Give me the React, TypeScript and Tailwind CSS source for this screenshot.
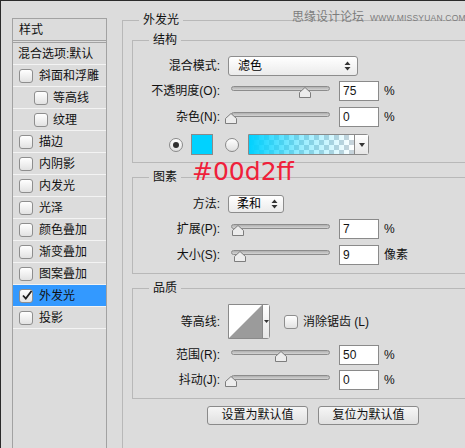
import clsx from 'clsx'
import type { ReactNode } from 'react'

const FONT = "font-['Liberation_Sans','Noto_Sans_CJK_SC',sans-serif]"

type StyleItem = { label: string; checked?: boolean; indent?: boolean; active?: boolean }

const STYLE_ITEMS: StyleItem[] = [
  { label: '斜面和浮雕' },
  { label: '等高线', indent: true },
  { label: '纹理', indent: true },
  { label: '描边' },
  { label: '内阴影' },
  { label: '内发光' },
  { label: '光泽' },
  { label: '颜色叠加' },
  { label: '渐变叠加' },
  { label: '图案叠加' },
  { label: '外发光', checked: true, active: true },
  { label: '投影' },
]

function Checkbox({ checked }: { checked?: boolean }) {
  return (
    <span className="relative flex h-[14px] w-[14px] shrink-0 items-center justify-center rounded-[3px] border border-[#8e8e8e] bg-linear-to-b from-white to-[#e2e2e2]">
      {checked && (
        <svg width="12" height="12" viewBox="0 0 12 12" className="absolute -top-[1px] left-[1px]">
          <path d="M2 6.5 L4.8 9.5 L10.5 2" fill="none" stroke="#1e1e1e" strokeWidth="1.8" />
        </svg>
      )}
    </span>
  )
}

function Radio({ selected }: { selected?: boolean }) {
  return (
    <span className="flex h-[14px] w-[14px] shrink-0 items-center justify-center rounded-full border border-[#8a8a8a] bg-linear-to-b from-white to-[#e0e0e0]">
      {selected && <span className="h-[6px] w-[6px] rounded-full bg-[#2f2f2f]" />}
    </span>
  )
}

function Slider({ pct }: { pct: number }) {
  return (
    <div className="relative ml-[5px] h-[20px] w-[111px]">
      <div className="absolute left-[6px] right-[6px] top-[5px] h-[5px] rounded-full border border-[#8c8c8c] bg-linear-to-b from-[#b0b0b0] to-[#d4d4d4]" />
      <svg
        className="absolute top-[6px]"
        style={{ left: Math.round(pct * 99) }}
        width="12"
        height="11"
        viewBox="0 0 12 11"
      >
        <path d="M0.5 10.5 V5.5 L6 0.5 L11.5 5.5 V10.5 Z" fill="#ececec" stroke="#7d7d7d" />
      </svg>
    </div>
  )
}

function NumberField({ value }: { value: string }) {
  return (
    <div className="ml-[3px] h-[20px] w-[40px] border border-[#8a8a8a] bg-white pl-[3px] text-[12px] leading-[18px] text-[#141414]">
      {value}
    </div>
  )
}

function UpDown() {
  return (
    <svg width="7" height="10" viewBox="0 0 7 10">
      <path d="M3.5 0.5 L6.5 4 H0.5 Z M0.5 6 H6.5 L3.5 9.5 Z" fill="#333" />
    </svg>
  )
}

function Row({ label, className, children }: { label: string; className?: string; children: ReactNode }) {
  return (
    <div className={clsx('flex items-center', className)}>
      <span className="w-[87px] whitespace-nowrap text-right text-[12px] text-[#111]">{label}</span>
      {children}
    </div>
  )
}

function GroupBox({ title, className, children }: { title: string; className?: string; children: ReactNode }) {
  return (
    <div className={clsx('relative border border-[#b8b8b8]', className)}>
      <span className="absolute -top-[9px] left-[16px] bg-[#dcdcdc] px-[4px] text-[12px] leading-[16px] text-[#111]">
        {title}
      </span>
      {children}
    </div>
  )
}

function SliderRow({ label, pct, value, unit, className }: { label: string; pct: number; value: string; unit: string; className?: string }) {
  return (
    <Row label={label} className={clsx('h-[20px]', className)}>
      <Slider pct={pct} />
      <NumberField value={value} />
      <span className="ml-[5px] text-[12px] text-[#111]">{unit}</span>
    </Row>
  )
}

function StyleList() {
  return (
    <div className="h-[450px] w-[95px] border border-[#a2a2a2] text-[12px] text-[#111]">
      <div className="flex h-[22px] items-center border-b border-[#a2a2a2] pl-[6px]">样式</div>
      <div className="mt-[1px] flex h-[23px] items-center border-y border-t-[#a2a2a2] border-b-[#f3f3f3] pl-[5px] whitespace-nowrap">
        混合选项:默认
      </div>
      {STYLE_ITEMS.map((item) => (
        <div
          key={item.label}
          className={clsx(
            'flex h-[22px] items-center border-b border-[#f3f3f3] whitespace-nowrap',
            item.indent ? 'pl-[21px]' : 'pl-[6px]',
            item.active && 'bg-[#3399ff]',
          )}
        >
          <Checkbox checked={item.checked} />
          <span className={item.indent ? 'ml-[5px]' : 'ml-[6px]'}>{item.label}</span>
        </div>
      ))}
    </div>
  )
}

export default function App() {
  return (
    <div className={clsx('relative flex h-[448px] w-[465px] overflow-hidden border-l border-t border-[#2b2b2b] bg-[#dcdcdc]', FONT)}>
      {/* left: style list */}
      <div className="w-[121px] shrink-0 pl-[11px] pt-[17px]">
        <StyleList />
      </div>

      {/* right: outer glow options */}
      <div className="shrink-0 pt-[19px]">
        <GroupBox title="外发光" className="h-[460px] w-[360px] pl-[9px] pt-[19px]">
          <GroupBox title="结构" className="pb-[7px] pt-[15px]">
            <Row label="混合模式:" className="h-[20px]">
              <div className="ml-[8px] flex h-[20px] w-[130px] items-center justify-between rounded-[3px] border border-[#8d8d8d] bg-linear-to-b from-white to-[#ebebeb] pl-[9px] pr-[6px] text-[12px]">
                <span>滤色</span>
                <UpDown />
              </div>
            </Row>
            <SliderRow label="不透明度(O):" pct={0.75} value="75" unit="%" className="mt-[5px]" />
            <SliderRow label="杂色(N):" pct={0} value="0" unit="%" className="mt-[6px]" />
            <div className="mt-[7px] flex h-[21px] items-center pl-[36px]">
              <Radio selected />
              <span className="ml-[8px] h-[21px] w-[22px] border border-[#8a8a8a] bg-[#00d2ff]" />
              <span className="ml-[12px]">
                <Radio />
              </span>
              <div className="ml-[9px] flex h-[21px] rounded-r-[3px] border border-[#8a8a8a]">
                <div className="h-full w-[105px] bg-[repeating-conic-gradient(#c9d3da_0%_25%,#ffffff_0%_50%)] bg-[length:10px_10px]">
                  <div className="h-full w-full bg-linear-to-r from-[#00d2ff] via-[#00d2ff]/40 to-transparent" />
                </div>
                <div className="flex w-[14px] items-center justify-center border-l border-[#8a8a8a] bg-linear-to-b from-white to-[#e6e6e6]">
                  <svg width="6" height="4" viewBox="0 0 6 4">
                    <path d="M0 0 H6 L3 4 Z" fill="#333" />
                  </svg>
                </div>
              </div>
            </div>
          </GroupBox>

          <GroupBox title="图素" className="mt-[14px] pb-[8px] pt-[17px]">
            <Row label="方法:" className="h-[18px]">
              <div className="ml-[8px] flex h-[18px] w-[56px] items-center justify-between rounded-[3px] border border-[#8d8d8d] bg-linear-to-b from-white to-[#ebebeb] pl-[8px] pr-[5px] text-[12px]">
                <span>柔和</span>
                <UpDown />
              </div>
            </Row>
            <SliderRow label="扩展(P):" pct={0.07} value="7" unit="%" className="mt-[6px]" />
            <SliderRow label="大小(S):" pct={0.09} value="9" unit="像素" className="mt-[6px]" />
          </GroupBox>

          <GroupBox title="品质" className="mt-[14px] pb-[8px] pt-[15px]">
            <Row label="等高线:" className="h-[35px]">
              <div className="ml-[8px] flex h-[35px] w-[42px] rounded-r-[3px] border border-[#8a8a8a] bg-white">
                <svg width="33" height="33" viewBox="0 0 33 33" className="block">
                  <path d="M0 33 L33 0 V33 Z" fill="#9b9b9b" />
                </svg>
                <div className="flex flex-1 items-center justify-center border-l border-[#8a8a8a] bg-linear-to-b from-white to-[#e6e6e6]">
                  <svg width="5" height="3" viewBox="0 0 5 3">
                    <path d="M0 0 H5 L2.5 3 Z" fill="#333" />
                  </svg>
                </div>
              </div>
              <span className="ml-[14px]">
                <Checkbox />
              </span>
              <span className="ml-[5px] text-[12px] text-[#111]">消除锯齿 (L)</span>
            </Row>
            <SliderRow label="范围(R):" pct={0.5} value="50" unit="%" className="mt-[6px]" />
            <SliderRow label="抖动(J):" pct={0} value="0" unit="%" className="mt-[5px]" />
          </GroupBox>

          <div className="mt-[7px] flex gap-[10px] pl-[75px]">
            <button
              type="button"
              className="h-[19px] w-[101px] rounded-[3px] border border-[#8a8a8a] bg-linear-to-b from-[#f6f6f6] to-[#e0e0e0] text-[12px] leading-[17px] text-[#111]"
            >
              设置为默认值
            </button>
            <button
              type="button"
              className="h-[19px] w-[101px] rounded-[3px] border border-[#8a8a8a] bg-linear-to-b from-[#f6f6f6] to-[#e0e0e0] text-[12px] leading-[17px] text-[#111]"
            >
              复位为默认值
            </button>
          </div>
        </GroupBox>
      </div>

      {/* watermark */}
      <div className="absolute left-[291px] top-[7px] flex items-baseline whitespace-nowrap text-[#7c7c7c]">
        <span className="text-[12px]">思缘设计论坛</span>
        <span className="ml-[6px] text-[8.5px] tracking-[0.2px]">WWW.MISSYUAN.COM</span>
      </div>

      {/* colour annotation */}
      <div className="absolute left-[191px] top-[158px] font-['DejaVu_Sans',sans-serif] text-[25px] leading-[25px] text-[#f0203a]">
        #00d2ff
      </div>
    </div>
  )
}
